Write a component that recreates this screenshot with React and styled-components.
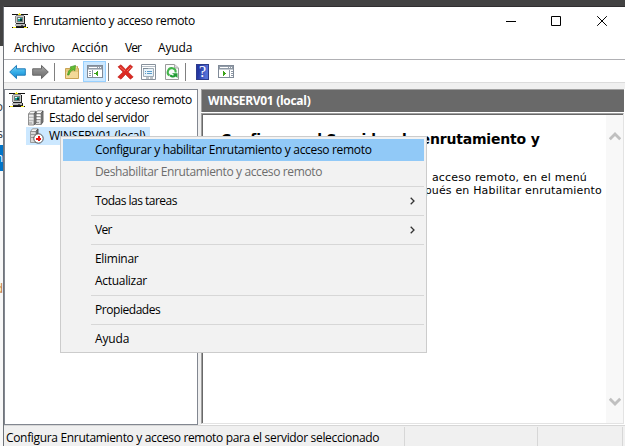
import React from 'react';
import styled, { createGlobalStyle } from 'styled-components';

const Global = createGlobalStyle`
  * { box-sizing: border-box; }
  html, body { margin: 0; padding: 0; overflow: hidden; }
  body { font: 12px/16px "Open Sans", "Noto Sans", sans-serif; color: #000; }
  svg { display: block; flex: none; }
`;

const Desktop = styled.div`
  position: relative;
  display: flex;
  width: 625px;
  height: 446px;
  padding-top: 6px;
  overflow: hidden;
  background: #424242;
`;
const Behind = styled.div`
  width: 3px;
  flex: none;
  padding-top: 40px;
  display: flex;
  flex-direction: column;
`;
const BehindPage = styled.div`
  flex: 1;
  width: 3px;
  overflow: hidden;
  padding-top: 52px;
  background: #f8f8f8;
`;
const BehindLine = styled.div`
  display: flex;
  justify-content: flex-end;
  align-items: center;
  height: ${(p) => p.$h}px;
  margin-bottom: ${(p) => p.$after || 0}px;
  color: ${(p) => p.$color || '#333'};
  background: ${(p) => (p.$selected ? '#0074c8' : 'transparent')};
`;
const Window = styled.div`
  flex: 1;
  min-width: 0;
  display: flex;
  flex-direction: column;
  border-left: 1px solid #70747a;
  border-top: 1px solid #302e30;
  background: #f0f0f0;
`;
const Label = styled.span`
  white-space: nowrap;
  letter-spacing: ${(p) => p.$ls || 0}px;
`;
const TitleBar = styled.header`
  height: 31px;
  flex: none;
  display: flex;
  align-items: center;
  padding: 0 0 3px 8px;
  gap: 5px;
  background: #fff;
`;
const Controls = styled.div`
  margin-left: auto;
  display: flex;
  padding-right: 17px;
  gap: 35px;
`;
const MenuBar = styled.nav`
  height: 22px;
  flex: none;
  display: flex;
  align-items: center;
  gap: 17px;
  padding: 0 0 1px 10px;
  background: #fff;
  border-bottom: 1px solid #b0b0b4;
`;
const Toolbar = styled.div`
  height: 23px;
  flex: none;
  display: flex;
  align-items: center;
  background: #fff;
  border-bottom: 1px solid #dcdcdc;
  padding: 1px 0 0 2px;
`;
const Tool = styled.div`
  width: 23px;
  height: 21px;
  display: flex;
  align-items: center;
  justify-content: center;
  padding-top: 1px;
  background: ${(p) => (p.$on ? '#cce8ff' : 'transparent')};
  border: 1px solid ${(p) => (p.$on ? '#99d1ff' : 'transparent')};
`;
const ToolRule = styled.div`
  width: 1px;
  height: 18px;
  margin: 0 ${(p) => p.$after}px 0 ${(p) => p.$before}px;
  background: #808080;
`;
const Body = styled.main`
  height: 336px;
  flex: none;
  margin-top: 6px;
  display: flex;
  gap: 3px;
`;
const Tree = styled.aside`
  width: 194px;
  flex: none;
  background: #fff;
  border: 1px solid #828790;
  padding: 1px 0 0 4px;
`;
const TreeRow = styled.div`
  display: flex;
  align-items: center;
  height: 18px;
  gap: 5px;
  margin-left: ${(p) => (p.$nested ? 17 : 0)}px;
  padding-left: ${(p) => (p.$nested ? 2 : 0)}px;
`;
const SelectedRow = styled(TreeRow)`
  width: 124px;
  background: #cce8ff;
`;
const Detail = styled.section`
  flex: 1;
  min-width: 0;
  display: flex;
  flex-direction: column;
  padding-right: 1px;
  background: #fff;
`;
const DetailHeader = styled.div`
  height: 23px;
  flex: none;
  padding: 3px 0 0 6px;
  color: #fff;
  font-weight: 700;
  background: #696969;
  border: solid #a0a0a0;
  border-width: 1px 0 0 1px;
`;
const DetailView = styled.div`
  height: 311px;
  margin-top: 1px;
  display: flex;
  border: 1px solid;
  border-color: #a0a0a0 #e3e3e3 #e3e3e3 #a0a0a0;
`;
const DetailInner = styled.div`
  flex: 1;
  display: flex;
  border: solid #696969;
  border-width: 1px 0 0 1px;
`;
const Article = styled.article`
  flex: 1;
  min-width: 0;
  padding: 15px 4px 0 18px;
  font: 11px/13px "DejaVu Sans", sans-serif;
`;
const Heading = styled.h1`
  margin: 0 0 23px;
  font: 700 14px/18px "DejaVu Sans", sans-serif;
  letter-spacing: ${(p) => p.$ls}px;
  white-space: nowrap;
`;
const Paragraph = styled.p`
  margin: 0;
  text-align: right;
  white-space: nowrap;
`;
const Line = styled.span`
  display: block;
  padding-right: ${(p) => p.$inset || 0}px;
  letter-spacing: ${(p) => p.$ls || 0}px;
`;
const Scrollbar = styled.div`
  width: 17px;
  flex: none;
  background: #f8f8f8;
  display: flex;
  flex-direction: column;
  align-items: center;
  justify-content: space-between;
  padding: 16px 0;
`;
const StatusBar = styled.footer`
  flex: 1;
  display: flex;
  border-top: 1px solid #d7d7d7;
  padding-top: 1px;
`;
const StatusCell = styled.div`
  width: ${(p) => p.$w}px;
  flex: none;
  border-right: 1px solid #d7d7d7;
  padding: 3px 0 0 2px;
`;
const ContextMenu = styled.div`
  position: absolute;
  left: 60px;
  top: 136px;
  width: 367px;
  height: 217px;
  padding: 2px;
  background: #f2f2f2;
  border: 1px solid #ccc;
`;
const MenuItem = styled.div`
  height: 22px;
  display: flex;
  align-items: center;
  justify-content: space-between;
  padding: 0 9px 0 32px;
  color: ${(p) => (p.$disabled ? '#6d6d6d' : '#000')};
  background: ${(p) => (p.$active ? '#91c9f7' : 'transparent')};
`;
const MenuRule = styled.hr`
  height: 1px;
  margin: 3px 0 3px 28px;
  border: 0;
  background: #d7d7d7;
`;

const ServerIcon = () => (
  <svg width="16" height="16" viewBox="0 0 16 16" shapeRendering="crispEdges">
    <path d="M0 1h16v1H0zM0 14h16v1H0z" fill="#111" />
    <path d="M6 1h3v1H6zM7 0h1v3H7zM1 14h3v1H1zM12 14h3v1h-3z" fill="#f4e81c" />
    <path d="M4 3h8v8H4z" fill="#c9cccb" />
    <path d="M4 2h8v1H4zM3 3h1v7H3z" fill="#888" />
    <path d="M12 3h1v8h-1zM4 10h8v1H4z" fill="#222" />
    <path d="M5 4h6v5H5z" fill="#747a78" />
    <path d="M6 5h4v3H6z" fill="#129b91" />
    <path d="M6 5h2v1H6z" fill="#d7ffff" />
    <path d="M8 6h2v2H8z" fill="#063c39" />
    <path d="M3 11h10v2H3z" fill="#bbb" />
    <path d="M4 13h10v1H4zM13 11h1v2h-1z" fill="#222" />
    <path d="M9 12h2v1H9z" fill="#555" />
  </svg>
);
const StackIcon = () => (
  <svg width="16" height="16" viewBox="0 0 16 16">
    {[7, 0].map((x) => (
      <g key={x} transform={`translate(${x} ${x ? 0 : 0.5})`}>
        <path d="M.5 3.5 2.5.8H8L6 3.5z" fill="#f8f8f8" stroke="#888" strokeWidth=".8" />
        <path d="M6 3.5 8 1v11l-2 2.5z" fill="#888" stroke="#444" strokeWidth=".8" />
        <path d="M.5 3.5H6v11H.5z" fill="#dedede" stroke="#777" strokeWidth=".8" />
        <path d="M1 6.5h4.5M1 9.5h4.5M1 12.5h3" stroke="#999" />
        <path d="M1 5.5h4.5M1 8.5h4.5" stroke="#fff" />
      </g>
    ))}
  </svg>
);
const StoppedIcon = () => (
  <svg width="16" height="16" viewBox="0 0 16 16">
    <path d="M2.5 3.5 4.5.8H10L8 3.5z" fill="#f4f4f4" stroke="#888" strokeWidth=".8" />
    <path d="M8 3.5 10 1v11l-2 2.5z" fill="#777" stroke="#444" strokeWidth=".8" />
    <path d="M2.5 3.5H8v11H2.5z" fill="#d8d8d8" stroke="#888" strokeWidth=".8" />
    <path d="M3 6.5h4.5M3 9.5h4" stroke="#999" />
    <circle cx="10.5" cy="10.5" r="4.7" fill="#fff" stroke="#444" strokeWidth=".9" />
    <path d="M10 8h2v2h1v2h-1v1h-2v-1H8v-2h2z" fill="#ed1111" shapeRendering="crispEdges" />
  </svg>
);
const Arrow = ({ right }) => (
  <svg width="17" height="16" viewBox="0 0 17 16">
    <defs>
      <linearGradient id={right ? 'fwd' : 'back'} x1="0" y1="0" x2="0" y2="1">
        <stop offset="0" stopColor={right ? '#aaa' : '#7bd0f4'} />
        <stop offset=".5" stopColor={right ? '#858585' : '#35aee8'} />
        <stop offset="1" stopColor={right ? '#6d6d6d' : '#1685cd'} />
      </linearGradient>
    </defs>
    <path
      transform={right ? 'translate(17 0) scale(-1 1)' : undefined}
      d="M.7 8 7.5 1.4v3.4h8.8v6.4H7.5v3.4z"
      fill={`url(#${right ? 'fwd' : 'back'})`}
      stroke={right ? '#666' : '#227db9'}
      strokeLinejoin="round"
    />
  </svg>
);
const FolderUp = () => (
  <svg width="16" height="16" viewBox="0 0 16 16">
    <path d="M1.5 4.5h7l1-2h4v2h1v10h-13z" fill="#e5c77c" stroke="#c9a354" />
    <path d="M2 8h12v6H2z" fill="#f3d998" />
    <path d="M9 3h4" stroke="#fff4d0" />
    <path d="M3.5 11C4 7.5 5.5 5.5 7.2 4.6L6 3l5.5-1.6-.7 5.4-1.5-1C7.2 6.5 5.5 8.5 5 11z" fill="#62bd32" stroke="#429326" strokeWidth=".7" />
  </svg>
);
const PaneIcon = ({ right }) => (
  <svg width="16" height="14" viewBox="0 0 16 14" shapeRendering="crispEdges">
    <path d="M.5.5h15v12H.5z" fill="#fff" stroke="#818b98" />
    <path d="M1 1h14v3H1z" fill="#929ca8" />
    <path d="M2 2h8v1H2zM11 2h1v1h-1zM13 2h1v1h-1z" fill="#fff" />
    <path d={right ? 'M11 5h1v7h-1z' : 'M5 5h1v7H5z'} fill="#8d98a5" />
    <path d={right ? 'M13.5 6v1m0 1v1m0 1v1' : 'M3 6v1m0 1v1m0 1v1'} stroke="#8d98a5" strokeWidth="2" />
    <path d="M1 4h14v1H1z" fill="#c5cbd2" />
    <path d={right ? 'M5 5.5v6L8.5 8.5z' : 'M11 5.5v6L7.5 8.5z'} fill="#3ca318" />
  </svg>
);
const DeleteIcon = () => (
  <svg width="17" height="16" viewBox="0 0 17 16">
    <path d="M1 2.8 4 .8l4.6 4.6L13 .8l2.7 2L11.2 8l5 5-2.9 2.2L8.5 10.4 4 15.2.8 13 6 8z" fill="#dc2922" stroke="#b9231e" strokeWidth=".6" />
    <path d="M3 3l5 4M14 3l-4 4" stroke="#f16a5c" />
  </svg>
);
const PropertiesIcon = () => (
  <svg width="16" height="16" viewBox="0 0 16 16">
    <path d="M.5.5h14v15H.5z" fill="#fff" stroke="#87919c" />
    <path d="M1 2.5h13" stroke="#b5bec7" />
    <path d="M2.5 4.5h10v8h-10z" fill="#e8f3fa" stroke="#a0acb7" />
    <path d="M2 4.5h5" stroke="#7f8c98" />
    <path d="M4 7.5h1m1 0h5M4 9.5h1m1 0h5" stroke="#5a9bc9" />
    <path d="M5 14h3m1 0h3" stroke="#77838e" />
  </svg>
);
const RefreshIcon = () => (
  <svg width="14" height="16" viewBox="0 0 14 16">
    <path d="M.5.5h9l4 3.5v11.5H.5z" fill="#fbfbfb" stroke="#9a9a9a" />
    <path d="M9.5.5V4h4" fill="#ddd" stroke="#aaa" />
    <path d="M4.5 11.5A4 4 0 1 1 10.7 8.5" fill="none" stroke="#42b449" strokeWidth="2" />
    <path d="M7 9.3h5.5V14L10.8 12.5C9 14 6.5 13.9 4.5 12l1.2-1.4c1.2 1 2.5 1 3.5.4z" fill="#239c34" />
  </svg>
);
const HelpMark = styled.div`
  width: 13px;
  height: 16px;
  background: linear-gradient(100deg, #2437a2 20%, #5470d7 80%);
  border: 1px solid #2e3c8b;
  color: #fff;
  font: 16px/14px "Liberation Serif", serif;
  text-align: center;
`;
const ScrollArrow = ({ down }) => (
  <svg width="12" height="10" viewBox="0 0 12 10">
    <path d={down ? 'M.8 1.8 6 7l5.2-5.2' : 'M.8 8.2 6 3l5.2 5.2'} fill="none" stroke="#c0c0c0" strokeWidth="2.8" />
  </svg>
);
const Chevron = () => (
  <svg width="5" height="8" viewBox="0 0 5 8">
    <path d="M.7.7 4 4 .7 7.3" fill="none" stroke="#333" strokeWidth="1.3" />
  </svg>
);

const menuItems = [
  { text: 'Configurar y habilitar Enrutamiento y acceso remoto', active: true, ls: -0.32 },
  { text: 'Deshabilitar Enrutamiento y acceso remoto', disabled: true, ls: -0.37 },
  null,
  { text: 'Todas las tareas', sub: true, ls: -0.52 },
  null,
  { text: 'Ver', sub: true, ls: -0.7 },
  null,
  { text: 'Eliminar', ls: -0.3 },
  { text: 'Actualizar', ls: -0.3 },
  null,
  { text: 'Propiedades', ls: -0.45 },
  null,
  { text: 'Ayuda', ls: -0.15 },
];

export default function App() {
  return (
    <Desktop>
      <Global />
      <Behind>
        <BehindPage>
          <BehindLine $h={18} $after={9}>o</BehindLine>
          <BehindLine $h={18} $after={2}>s</BehindLine>
          <BehindLine $h={26} $color="#fff" $selected>n</BehindLine>
          <BehindLine $h={18} />
          <BehindLine $h={200} $color="#c07830">d</BehindLine>
        </BehindPage>
      </Behind>
      <Window>
        <TitleBar>
          <ServerIcon />
          <Label $ls={-0.35}>Enrutamiento y acceso remoto</Label>
          <Controls>
            <svg width="10" height="10"><path d="M0 5h10v1H0z" /></svg>
            <svg width="10" height="10"><path d="M.5.5h9v9h-9z" fill="none" stroke="#000" /></svg>
            <svg width="12" height="10"><path d="M1.2.2l9.6 9.6M10.8.2L1.2 9.8" stroke="#000" /></svg>
          </Controls>
        </TitleBar>
        <MenuBar>
          <Label $ls={-0.15}>Archivo</Label>
          <Label $ls={-0.1}>Acción</Label>
          <Label $ls={-0.9}>Ver</Label>
          <Label $ls={-0.15}>Ayuda</Label>
        </MenuBar>
        <Toolbar>
          <Tool><Arrow /></Tool>
          <Tool><Arrow right /></Tool>
          <ToolRule $before={2} $after={5} />
          <Tool><FolderUp /></Tool>
          <Tool $on><PaneIcon /></Tool>
          <ToolRule $before={2} $after={5} />
          <Tool><DeleteIcon /></Tool>
          <Tool><PropertiesIcon /></Tool>
          <Tool><RefreshIcon /></Tool>
          <ToolRule $before={2} $after={5} />
          <Tool><HelpMark>?</HelpMark></Tool>
          <Tool><PaneIcon right /></Tool>
        </Toolbar>
        <Body>
          <Tree>
            <TreeRow><ServerIcon /><Label $ls={-0.35}>Enrutamiento y acceso remoto</Label></TreeRow>
            <TreeRow $nested><StackIcon /><Label $ls={-0.4}>Estado del servidor</Label></TreeRow>
            <SelectedRow $nested><StoppedIcon /><Label $ls={-0.27}>WINSERV01 (local)</Label></SelectedRow>
          </Tree>
          <Detail>
            <DetailHeader><Label $ls={-0.3}>WINSERV01 (local)</Label></DetailHeader>
            <DetailView>
              <DetailInner>
                <Article>
                  <Heading $ls={-0.18}>Configurar el Servidor de enrutamiento y</Heading>
                  <Paragraph>
                    <Line $inset={15} $ls={0.2}>acceso remoto, en el menú</Line>
                    <Line $ls={0.17}>Acción y después en Habilitar enrutamiento</Line>
                  </Paragraph>
                </Article>
                <Scrollbar><ScrollArrow /><ScrollArrow down /></Scrollbar>
              </DetailInner>
            </DetailView>
          </Detail>
        </Body>
        <StatusBar>
          <StatusCell $w={401}><Label $ls={-0.33}>Configura Enrutamiento y acceso remoto para el servidor seleccionado</Label></StatusCell>
          <StatusCell $w={133} />
          <StatusCell $w={85} />
        </StatusBar>
      </Window>
      <ContextMenu>
        {menuItems.map((item, i) =>
          item ? (
            <MenuItem key={i} $active={item.active} $disabled={item.disabled}>
              <Label $ls={item.ls}>{item.text}</Label>
              {item.sub && <Chevron />}
            </MenuItem>
          ) : (
            <MenuRule key={i} />
          ),
        )}
      </ContextMenu>
    </Desktop>
  );
}
